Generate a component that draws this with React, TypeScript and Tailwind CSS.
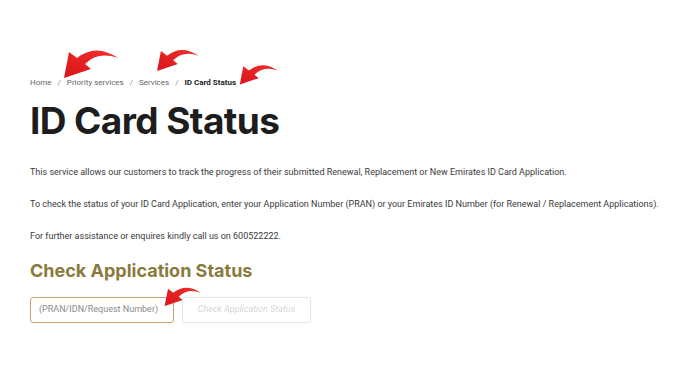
import React from 'react'

const Arrow = ({ className }: { className: string }) => (
  <svg className={className} viewBox="0 0 60 32" fill="none" xmlns="http://www.w3.org/2000/svg">
    <defs>
      <linearGradient id="ag" x1="0" y1="1" x2="1" y2="0">
        <stop offset="0" stopColor="#d9141b" />
        <stop offset="1" stopColor="#f2302a" />
      </linearGradient>
    </defs>
    <path d="M4 31 L9 5 L17 11 Q36 -4 58 11 Q38 4 25 17 L31 22 Z" fill="url(#ag)" />
  </svg>
)

const crumbs = ['Home', 'Priority services', 'Services']

export default function App() {
  return (
    <div className="relative min-h-[391px] w-[685px] bg-white overflow-hidden" style={{ fontFamily: 'Roboto, "Liberation Sans", sans-serif' }}>
      <div className="pl-[30px] pt-[77px]">
        <nav className="flex items-center text-[8px] leading-[12px] text-[#666]">
          {crumbs.map((c) => (
            <React.Fragment key={c}>
              <span>{c}</span>
              <span className="mx-[6px] text-[#888]">/</span>
            </React.Fragment>
          ))}
          <span className="font-bold text-[#222]">ID Card Status</span>
        </nav>

        <h1 className="mt-[8px] text-[37px] leading-[48px] font-bold text-[#1d1d1d] tracking-[-0.6px]" style={{ fontFamily: 'Inter, "Liberation Sans", sans-serif' }}>
          ID Card Status
        </h1>

        <div className="mt-[21px] text-[9px] leading-[12px] text-[#3a3a3a]">
          <p>This service allows our customers to track the progress of their submitted Renewal, Replacement or New Emirates ID Card Application.</p>
          <p className="mt-[20px]">To check the status of your ID Card Application, enter your Application Number (PRAN) or your Emirates ID Number (for Renewal / Replacement Applications).</p>
          <p className="mt-[20px]">For further assistance or enquires kindly call us on 600522222.</p>
        </div>

        <h2 className="mt-[17px] text-[18px] leading-[24px] font-bold text-[#8a7a3c]" style={{ fontFamily: 'Inter, "Liberation Sans", sans-serif' }}>
          Check Application Status
        </h2>

        <div className="mt-[14px] flex gap-[8px]">
          <div className="h-[26px] w-[144px] rounded-[3px] border border-[#c9a468] flex items-center px-[8px] text-[9px] text-[#8a8a8a]">
            (PRAN/IDN/Request Number)
          </div>
          <div className="h-[26px] w-[129px] rounded-[3px] border border-[#e6e6e6] shadow-[0_0_2px_rgba(0,0,0,0.06)] flex items-center justify-center text-[9px] italic text-[#d4d4d4] blur-[0.4px]">
            Check Application Status
          </div>
        </div>
      </div>

      <Arrow className="absolute left-[60px] top-[47px] w-[60px] h-[32px]" />
      <Arrow className="absolute left-[154px] top-[46px] w-[46px] h-[27px]" />
      <Arrow className="absolute left-[237px] top-[60px] w-[42px] h-[28px]" />
      <Arrow className="absolute left-[162px] top-[283px] w-[40px] h-[26px]" />
    </div>
  )
}
